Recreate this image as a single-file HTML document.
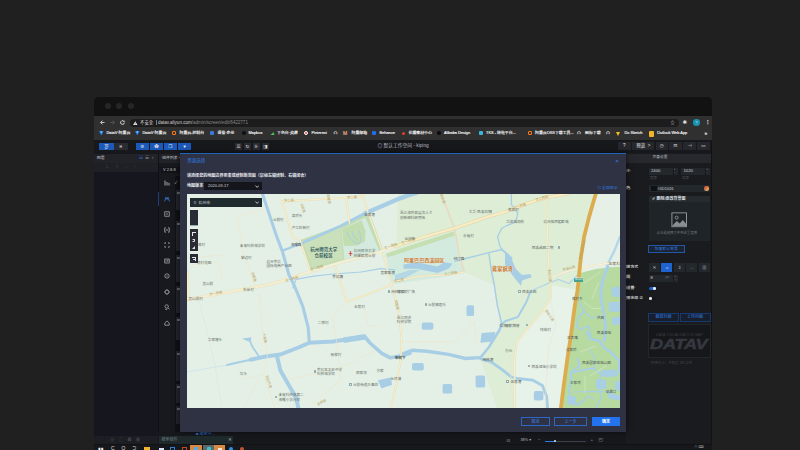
<!DOCTYPE html>
<html lang="zh">
<head>
<meta charset="utf-8">
<title>DataV</title>
<style>
html,body{margin:0;padding:0;}
body{width:800px;height:450px;overflow:hidden;background:#202020;position:relative;font-family:"Liberation Sans","Noto Sans CJK SC","DejaVu Sans",sans-serif;color:#ccc;}
.a{position:absolute;}
.t{position:absolute;white-space:nowrap;line-height:1;font-size:4.2px;color:#cfcfcf;}
/* window */
#win{left:94px;top:97px;width:618px;height:353px;background:#121212;border-radius:4.5px 4.5px 0 0;overflow:hidden;}
#stage{left:-94px;top:-97px;width:800px;height:450px;}
.dot{width:6px;height:6px;border-radius:50%;background:#262626;top:103px;}
#tb{left:94px;top:116px;width:618px;height:24px;background:#303031;}
#pill{left:130px;top:118.5px;width:549px;height:8px;border-radius:4px;background:#1c1c1d;}
.bm{top:131.4px;font-size:3.9px;color:#f4f4f4;-webkit-text-stroke:.14px #f4f4f4;}
.bi{top:131.3px;width:4.2px;height:4.2px;border-radius:1px;}
#app{left:94px;top:140px;width:617px;height:304px;background:#17181c;}
.btn{top:143px;height:7px;background:#1b59bb;}
.gb{top:143px;height:7px;background:#2a2b31;}
.rb{top:142.3px;height:7.6px;background:#26272d;}
.ic{font-size:4.5px;color:#e8e8e8;text-align:center;line-height:7px;}
/* panels */
#lay{left:94px;top:153px;width:64px;height:291px;background:#16171e;}
#layh{left:94px;top:153.5px;width:64px;height:9px;background:#212329;}
#layt{left:94px;top:162.5px;width:64px;height:9.5px;background:#1e2026;}
#comp{left:158px;top:153px;width:22px;height:291px;background:#18191e;}
#comph{left:159px;top:153.5px;width:21px;height:9px;background:#212329;}
.ci{left:163.5px;width:6px;height:6px;font-size:6px;color:#b8bcc4;line-height:6px;text-align:center;}
#rp{left:626px;top:153px;width:85px;height:291px;background:#191b1e;background-image:radial-gradient(#22262a 0.4px,transparent 0.5px);background-size:2px 2px;}
#rph{left:626px;top:153.5px;width:85px;height:9px;background:#26282e;}
.inp{background:#23282d;height:6.6px;}
.lab{font-size:3.86px;color:#d0d2d6;font-weight:bold;}
/* dialog */
#dlg{left:180px;top:153px;width:446px;height:279px;background:#2f3243;border-top:1.3px solid #1f64b4;box-sizing:border-box;box-shadow:0 0 6px rgba(0,0,0,.6);}
#map{left:187px;top:194px;width:433px;height:214px;background:#e4f0e6;overflow:hidden;}
.ml{position:absolute;white-space:nowrap;line-height:1;font-size:3.6px;color:#6b6f6b;}
</style>
</head>
<body>
<div id="win" class="a"><div id="stage" class="a">
  <!-- title bar -->
  <div class="a dot" style="left:105px"></div>
  <div class="a dot" style="left:116.4px"></div>
  <div class="a dot" style="left:127.6px"></div>
  <!-- chrome toolbar -->
  <div id="tb" class="a"></div>
  <div id="pill" class="a"></div>
  <svg class="a" style="left:99.6px;top:120.2px" width="5" height="5" viewBox="0 0 5 5" fill="none" stroke="#e8e8e8" stroke-width=".8"><path d="M4.6 2.5H.7M2.4 .6L.6 2.5L2.4 4.4"/></svg>
  <svg class="a" style="left:109.6px;top:120.2px" width="5" height="5" viewBox="0 0 5 5" fill="none" stroke="#5e5e5e" stroke-width=".8"><path d="M.4 2.5H4.3M2.6 .6L4.4 2.5L2.6 4.4"/></svg>
  <svg class="a" style="left:120.2px;top:120.2px" width="5" height="5" viewBox="0 0 5 5" fill="none" stroke="#e8e8e8" stroke-width=".85"><path d="M4.3 2.5A1.85 1.85 0 1 1 3.6 1.05"/><path d="M4.5 .3V1.9H2.9Z" fill="#e8e8e8" stroke="none"/></svg>
  <svg class="a" style="left:133px;top:120.6px" width="4.6" height="4.2" viewBox="0 0 4.6 4.2"><path d="M2.3 .2L4.5 4H.1Z" fill="#e8e8e8"/><path d="M2.3 1.6V2.8M2.3 3.2V3.6" stroke="#222" stroke-width=".5"/></svg>
  <div class="t" style="left:140px;top:120.6px;font-size:4.4px;color:#dcdcdc;">不安全</div>
  <div class="a" style="left:155.5px;top:120px;width:.5px;height:5px;background:#777;"></div>
  <div class="t" style="left:158px;top:120.5px;font-size:4.55px;color:#d0d0d0;">datav.aliyun.com<span style="color:#8a8a8a">/admin/screen/edit/6422771</span></div>
  <div class="t" style="left:670.6px;top:120.6px;font-size:4.2px;color:#bdbdbd;">☆</div>
  <div class="t" style="left:682.5px;top:119.8px;font-size:5.5px;color:#e0e0e0;">✱</div>
  <div class="a" style="left:693px;top:119.3px;width:6.6px;height:6.6px;border-radius:50%;background:#1a93b0;"></div>
  <div class="t" style="left:695.2px;top:120.5px;font-size:4px;color:#cfeaf2;">?</div>
  <div class="t" style="left:705px;top:119.6px;font-size:5.5px;color:#e0e0e0;font-weight:bold;">⋮</div>

  <!-- bookmarks -->
  <svg class="a" style="left:99.3px;top:131.2px" width="4.6" height="4.4" viewBox="0 0 4.6 4.4"><path d="M0 .2H4.6L2.3 4.3Z" fill="#1f8bff"/><path d="M1.2 .2H3.4L2.3 2.2Z" fill="#8cc8ff"/></svg><div class="t bm" style="left:106.5px">DataV·阿里云</div>
  <svg class="a" style="left:135.3px;top:131.2px" width="4.6" height="4.4" viewBox="0 0 4.6 4.4"><path d="M0 .2H4.6L2.3 4.3Z" fill="#1f8bff"/><path d="M1.2 .2H3.4L2.3 2.2Z" fill="#8cc8ff"/></svg><div class="t bm" style="left:142.5px">DataV·阿里云</div>
  <div class="a bi" style="left:172px;background:transparent;border:0.8px solid #ff7a1a;box-sizing:border-box;"></div><div class="t bm" style="left:179.5px">阿里云-控制台</div>
  <div class="a bi" style="left:210px;background:#3e78d6;"></div><div class="t bm" style="left:217.5px">语雀·企业</div>
  <div class="a bi" style="left:241.5px;background:#101010;border-radius:50%;"></div><div class="t bm" style="left:248.5px">Mapbox</div>
  <div class="a" style="left:270.5px;top:131.5px;width:0;height:0;border-left:2px solid transparent;border-right:2px solid transparent;border-bottom:3.8px solid #49c24c;transform:skewX(-18deg);"></div><div class="t bm" style="left:277px">下色台·资源</div>
  <div class="a bi" style="left:304px;background:#e23b2e;border-radius:50%;border:.6px solid #fff;box-sizing:border-box;"></div><div class="t bm" style="left:311.5px">Pinterest</div>
  <div class="t bm" style="left:333.5px;color:#dadada">凸</div>
  <div class="t bm" style="left:343px;color:#ff6a1f;font-size:5px;top:130.8px">M</div><div class="t bm" style="left:351.5px">阿里邮箱</div>
  <div class="a bi" style="left:372px;background:#1f6cf0;"></div><div class="t bm" style="left:379.5px">Behance</div>
  <div class="a bi" style="left:401.5px;top:132px;width:3px;height:3px;background:#e8392c;border-radius:50%;"></div><div class="t bm" style="left:408.5px">花瓣素材中心</div>
  <div class="a bi" style="left:436.5px;background:#0a0a0a;border-radius:50%;"></div><div class="t bm" style="left:444px">Alibaba Design</div>
  <div class="a bi" style="left:478.5px;width:4px;background:#39b6d8;"></div><div class="t bm" style="left:486px">TKS - 特效平台...</div>
  <div class="a bi" style="left:527.5px;background:transparent;border:0.8px solid #ff7a1a;box-sizing:border-box;"></div><div class="t bm" style="left:535px">阿里云OSS下载工具...</div>
  <div class="t bm" style="left:577px;color:#dadada">凸</div><div class="t bm" style="left:585px">图标下载</div>
  <div class="t bm" style="left:606px;color:#dadada">凸</div>
  <div class="a" style="left:615.5px;top:131.5px;width:0;height:0;border-left:2.7px solid transparent;border-right:2.7px solid transparent;border-top:4px solid #fdbd1a;"></div><div class="t bm" style="left:624.5px">Do Sketch</div>
  <div class="a bi" style="left:648.5px;width:5.5px;height:5.5px;background:#f2b52a;"></div><div class="t bm" style="left:657px">Outlook Web App</div>
  <div class="t bm" style="left:704.5px;font-size:5px;top:130.5px">»</div>

  <!-- app -->
  <div id="app" class="a"></div>
  <div class="a btn ic" style="left:99px;width:15px;">罗</div>
  <div class="a gb ic" style="left:114px;width:13.5px;">ʜ</div>
  <div class="a btn ic" style="left:136px;width:12.7px;">⚙</div>
  <div class="a btn ic" style="left:150px;width:13px;">✿</div>
  <div class="a btn ic" style="left:164px;width:12.7px;">❐</div>
  <div class="a btn ic" style="left:178px;width:13px;">♥</div>
  <div class="a gb ic" style="left:235px;width:7px;">☰</div>
  <div class="a gb ic" style="left:244px;width:7px;">↻</div>
  <div class="a gb ic" style="left:253px;width:7px;">⊪</div>
  <div class="a gb ic" style="left:262px;width:7px;">◨</div>
  <div class="t" style="left:377.5px;top:143.9px;font-size:4.75px;color:#b9bcc2;">◎ 默认工作空间 - kiping</div>
  <div class="a rb ic" style="left:618px;width:12.6px;">?</div>
  <div class="a rb ic" style="left:632.4px;width:21.8px;">预览 &nbsp;&gt;</div>
  <div class="a rb ic" style="left:655.5px;width:12.5px;">◷</div>
  <div class="a rb ic" style="left:669px;width:13px;">⊡</div>
  <div class="a rb ic" style="left:683px;width:13.3px;">⊣</div>
  <div class="a rb ic" style="left:697.2px;width:12.6px;">▭</div>

  <!-- layer panel -->
  <div id="lay" class="a"></div>
  <div id="layh" class="a"></div>
  <div id="layt" class="a"></div>
  <div class="t" style="left:96.8px;top:156.2px;font-size:3.9px;color:#c9ccd2;">图层</div>
  <div class="t" style="left:139px;top:155.8px;font-size:4.6px;color:#3a7be0;">☷</div>
  <div class="t" style="left:145px;top:155.8px;font-size:4.6px;color:#8f939b;">☰</div>
  <div class="t" style="left:152px;top:155.8px;font-size:4.6px;color:#8f939b;">‹</div>
  <div class="t" style="left:105px;top:165px;font-size:4.6px;color:#3d4048;letter-spacing:6.3px;">↧↥↓↑</div>
  <div class="a" style="left:94px;top:436px;width:64px;height:8px;background:#1c1e23;"></div>
  <div class="t" style="left:110px;top:438px;font-size:4.4px;color:#3d4048;letter-spacing:4.2px;">▣☖☗◉</div>
  <!-- component column -->
  <div id="comp" class="a"></div>
  <div id="comph" class="a"></div>
  <div class="a" style="left:157.5px;top:153px;width:.7px;height:291px;background:#0f1013;"></div>
  <div class="t" style="left:162px;top:156.2px;font-size:3.9px;color:#c9ccd2;">组件列表 ‹</div>
  <div class="a" style="left:161px;top:166.5px;width:19px;height:6px;background:#121317;"></div>
  <div class="t" style="left:163px;top:167.6px;font-size:4px;color:#c9ccd2;">V 2.8.8</div>
  <div class="a" style="left:175.3px;top:176px;width:4.7px;height:256px;background:#101115;"></div>
  <div class="t" style="left:174.5px;top:180.5px;font-size:4.4px;color:#c9ccd2;">✓</div>
  <div class="a" style="left:175.6px;top:190px;width:4.4px;height:20.0px;background:#22242a;"></div>
  <div class="a" style="left:176.8px;top:192px;width:3.2px;height:2.4px;background:#7d8088;opacity:.7;"></div>
  <div class="a" style="left:175.6px;top:221px;width:4.4px;height:30.0px;background:#22242a;"></div>
  <div class="a" style="left:176.8px;top:223px;width:3.2px;height:2.4px;background:#7d8088;opacity:.7;"></div>
  <div class="a" style="left:175.6px;top:255px;width:4.4px;height:27.0px;background:#22242a;"></div>
  <div class="a" style="left:176.8px;top:257px;width:3.2px;height:2.4px;background:#7d8088;opacity:.7;"></div>
  <div class="a" style="left:175.6px;top:286px;width:4.4px;height:27.0px;background:#22242a;"></div>
  <div class="a" style="left:176.8px;top:288px;width:3.2px;height:2.4px;background:#7d8088;opacity:.7;"></div>
  <div class="a" style="left:175.6px;top:317px;width:4.4px;height:23.0px;background:#22242a;"></div>
  <div class="a" style="left:176.8px;top:319px;width:3.2px;height:2.4px;background:#7d8088;opacity:.7;"></div>
  <div class="a" style="left:175.6px;top:351px;width:4.4px;height:30.0px;background:#22242a;"></div>
  <div class="a" style="left:176.8px;top:353px;width:3.2px;height:2.4px;background:#7d8088;opacity:.7;"></div>
  <div class="a" style="left:175.6px;top:384px;width:4.4px;height:18.5px;background:#22242a;"></div>
  <div class="a" style="left:176.8px;top:386px;width:3.2px;height:2.4px;background:#7d8088;opacity:.7;"></div>
  <div class="a" style="left:175.6px;top:405.6px;width:4.4px;height:18.4px;background:#22242a;"></div>
  <div class="a" style="left:176.8px;top:407.6px;width:3.2px;height:2.4px;background:#7d8088;opacity:.7;"></div>

  <svg class="a" style="left:163.7px;top:180.3px;color:#b4b8c0" width="6" height="6" viewBox="0 0 6 6" fill="none" stroke="currentColor" stroke-width=".7"><path d="M1 .5V5.5M3 2V5.5M5 2.8V5.5" stroke-width=".9"/></svg>
  <svg class="a" style="left:163.7px;top:195.8px;color:#3a7be0" width="6" height="6" viewBox="0 0 6 6" fill="none" stroke="currentColor" stroke-width=".7"><path d="M.6 5.4L2 1.2L3 3.6L4 1.2L5.4 5.4" stroke-width=".8"/></svg>
  <svg class="a" style="left:163.7px;top:211.3px;color:#b4b8c0" width="6" height="6" viewBox="0 0 6 6" fill="none" stroke="currentColor" stroke-width=".7"><rect x=".8" y=".8" width="4.4" height="4.4"/><rect x="2.4" y="2.4" width="1.2" height="1.2" fill="currentColor" stroke="none"/></svg>
  <svg class="a" style="left:163.7px;top:226.8px;color:#b4b8c0" width="6" height="6" viewBox="0 0 6 6" fill="none" stroke="currentColor" stroke-width=".7"><path d="M1.8 .8H.8V5.2H1.8M4.2 .8H5.2V5.2H4.2M3 2V4" stroke-width=".8"/></svg>
  <svg class="a" style="left:163.7px;top:242.3px;color:#b4b8c0" width="6" height="6" viewBox="0 0 6 6" fill="none" stroke="currentColor" stroke-width=".7"><path d="M.8 2V.8H2M4 .8H5.2V2M5.2 4V5.2H4M2 5.2H.8V4"/></svg>
  <svg class="a" style="left:163.7px;top:257.8px;color:#b4b8c0" width="6" height="6" viewBox="0 0 6 6" fill="none" stroke="currentColor" stroke-width=".7"><rect x=".8" y="1" width="4.4" height="4"/><path d="M2 2.2V3.8M3.2 3.8V2.2H4.2V3H3.2" stroke-width=".5"/></svg>
  <svg class="a" style="left:163.7px;top:273.3px;color:#b4b8c0" width="6" height="6" viewBox="0 0 6 6" fill="none" stroke="currentColor" stroke-width=".7"><circle cx="3" cy="3" r="2.2"/><circle cx="3" cy="3" r=".6" fill="currentColor" stroke="none"/></svg>
  <svg class="a" style="left:163.7px;top:288.8px;color:#b4b8c0" width="6" height="6" viewBox="0 0 6 6" fill="none" stroke="currentColor" stroke-width=".7"><circle cx="3" cy="3" r="2"/><path d="M3 .2V1.6M3 4.4V5.8M.2 3H1.6M4.4 3H5.8" stroke-width=".6"/></svg>
  <svg class="a" style="left:163.7px;top:304.3px;color:#b4b8c0" width="6" height="6" viewBox="0 0 6 6" fill="none" stroke="currentColor" stroke-width=".7"><circle cx="2.7" cy="2.5" r="1.7"/><path d="M3.9 3.8L5.4 5.4M1.2 5.4H3.2"/></svg>
  <svg class="a" style="left:163.7px;top:319.8px;color:#b4b8c0" width="6" height="6" viewBox="0 0 6 6" fill="none" stroke="currentColor" stroke-width=".7"><path d="M.8 3L3 .9L5.2 3V5.2H.8Z"/></svg>
  <div class="a" style="left:158.2px;top:192px;width:.6px;height:13.5px;background:#1d3f7a;"></div>
  <!-- bottom bars -->
  <div class="a" style="left:158px;top:432px;width:468px;height:12px;background:#17181c;"></div>
  <div class="a" style="left:159px;top:436px;width:74px;height:8px;background:#1f2a2c;"></div>
  <div class="t" style="left:161.5px;top:438px;font-size:4px;color:#6f7c80;">搜索组件</div>
  <div class="t" style="left:228px;top:437.5px;font-size:4.6px;color:#9aa;">✕</div>
  <div class="t" style="left:196px;top:432.2px;font-size:4px;color:#2f7de0;">■ 搜索中...</div>
  <div class="t" style="left:506.5px;top:438.6px;font-size:4.4px;color:#9da1a8;">⊡</div>
  <div class="t" style="left:520.5px;top:439.2px;font-size:3.8px;color:#b5b8be;">38% ▾</div>
  <div class="t" style="left:538px;top:438.4px;font-size:4.4px;color:#9da1a8;">−</div>
  <div class="a" style="left:545px;top:440.8px;width:41px;height:.7px;background:#3c4048;"></div>
  <div class="a" style="left:545px;top:440.8px;width:10px;height:.7px;background:#2f7de0;"></div>
  <div class="a" style="left:554px;top:440px;width:2.2px;height:2.2px;border-radius:50%;background:#dfe6f0;"></div>
  <div class="t" style="left:590.5px;top:438.4px;font-size:4.4px;color:#9da1a8;">+</div>
  <div class="t" style="left:598.5px;top:438.4px;font-size:4.6px;color:#9da1a8;">◰</div>
  <!-- taskbar -->
  <div class="a" style="left:94px;top:444.5px;width:618px;height:6px;background:#17181b;"></div>
  <div class="t" style="left:98px;top:446.5px;font-size:5px;color:#f0f0f0;">▮▮</div>
  <div class="t" style="left:111px;top:446.3px;font-size:5px;color:#ddd;letter-spacing:7px;">ϹΟϽ</div>
  <div class="a" style="left:144px;top:447px;width:6px;height:3px;background:#f2b632;"></div>
  <div class="a" style="left:159px;top:447.5px;width:5px;height:3px;background:#d7e6f4;"></div>
  <div class="a" style="left:170px;top:446.5px;width:5px;height:4px;border:.7px solid #2a7fd6;box-sizing:border-box;"></div>
  <div class="a" style="left:182px;top:446.5px;width:5px;height:4px;border:.7px solid #c04a23;box-sizing:border-box;"></div>
  <div class="a" style="left:189.5px;top:444.6px;width:12px;height:6px;background:#d58a45;"></div>
  <div class="a" style="left:203px;top:444.6px;width:11px;height:6px;background:#5d6a6c;"></div>
  <div class="a" style="left:214px;top:444.6px;width:11px;height:6px;background:#d58a45;"></div>
  <div class="a" style="left:193.5px;top:447px;width:4px;height:3px;background:#5aa9e6;border-radius:1px 1px 0 0;"></div>
  <div class="a" style="left:206.5px;top:447px;width:4px;height:3px;background:#3cc3c6;border-radius:1px 1px 0 0;"></div>
  <div class="a" style="left:217.5px;top:447.5px;width:4px;height:3px;background:#f4e7cf;"></div>
  <div class="a" style="left:229px;top:447px;width:4px;height:4px;border-radius:50%;background:#2a8fe8;"></div>
  <div class="a" style="left:240px;top:447px;width:4px;height:4px;border-radius:50%;background:#c0552f;"></div>
  <div class="t" style="left:694px;top:445.5px;font-size:3.6px;color:#aaa;">∧ ⌨</div>

  <!-- right panel -->
  <div id="rp" class="a"></div>
  <div id="rph" class="a"></div>
  <div class="t" style="left:652.6px;top:156.2px;font-size:3.7px;color:#b9bcc2;">页面设置</div>
  <div class="t lab" style="left:615px;top:170.2px;">屏幕大小</div>
  <div class="a inp" style="left:649px;top:168px;width:28.5px;"></div>
  <div class="a inp" style="left:681px;top:168px;width:28.8px;"></div>
  <div class="t" style="left:651px;top:169.3px;font-size:4.2px;color:#d4d7db;">2400</div>
  <div class="t" style="left:683.5px;top:169.3px;font-size:4.2px;color:#d4d7db;">1020</div>
  <div class="a" style="left:672.5px;top:168px;width:.5px;height:6.6px;background:#15171a;"></div>
  <div class="a" style="left:704.8px;top:168px;width:.5px;height:6.6px;background:#15171a;"></div>
  <div class="t" style="left:673.6px;top:168.4px;font-size:3px;color:#8d9096;">+</div>
  <div class="t" style="left:673.8px;top:171.2px;font-size:3px;color:#8d9096;">-</div>
  <div class="t" style="left:705.9px;top:168.4px;font-size:3px;color:#8d9096;">+</div>
  <div class="t" style="left:706.1px;top:171.2px;font-size:3px;color:#8d9096;">-</div>
  <div class="t" style="left:650px;top:176.8px;font-size:3.5px;color:#4c5057;">宽度</div>
  <div class="t" style="left:682px;top:176.8px;font-size:3.5px;color:#4c5057;">高度</div>
  <div class="t lab" style="left:615px;top:186.9px;">背景颜色</div>
  <div class="a inp" style="left:649px;top:185.2px;width:60.8px;height:6.4px;"></div>
  <div class="a" style="left:650.5px;top:186px;width:6px;height:4.8px;background:#0d1016;"></div>
  <div class="t" style="left:657.6px;top:186.6px;font-size:3.9px;color:#d4d7db;">#0D1016</div>
  <div class="a" style="left:704.3px;top:186.2px;width:4.4px;height:4.4px;border-radius:50%;background:conic-gradient(#e8623a,#f2a33a,#d8a070,#c06a4a,#e8623a);"></div>
  <div class="a inp" style="left:649px;top:196px;width:60.8px;height:6px;background:#262b30;"></div>
  <div class="t" style="left:652px;top:197px;font-size:4px;color:#dfe1e5;font-weight:bold;">✐ 删除/更改背景图</div>
  <div class="a" style="left:649px;top:202.4px;width:60.8px;height:39px;background:#1e2428;"></div>
  <svg class="a" style="left:671px;top:212.2px;" width="16.4" height="15.6" viewBox="0 0 18 18" preserveAspectRatio="none"><rect x="1" y="1" width="16" height="16" fill="none" stroke="#9a9ea4" stroke-width="1"/><circle cx="6.2" cy="6.5" r="1.7" fill="none" stroke="#9a9ea4" stroke-width=".9"/><path d="M1.5 15.5 L6.5 10.5 L9.5 13.2 L13 9.2 L16.5 13.5 L16.5 16.5 L1.5 16.5Z" fill="#8a8e94"/></svg>
  <div class="t" style="left:656.5px;top:231.8px;font-size:3.4px;color:#6f747b;">点击或拖拽文件到这里更换</div>
  <div class="a" style="left:648.3px;top:244.8px;width:37.2px;height:8.7px;border:.6px solid #2456a6;box-sizing:border-box;background:#1b2230;"></div>
  <div class="t" style="left:654.5px;top:247.2px;font-size:3.9px;color:#2f7de0;">恢复默认背景</div>
  <div class="t lab" style="left:615px;top:266.2px;">页面缩放方式</div>
  <div class="a inp" style="left:648.8px;top:263.3px;width:10.9px;height:9.2px;"></div>
  <div class="a inp" style="left:661.3px;top:263.3px;width:10.9px;height:9.2px;background:#1f63cf;"></div>
  <div class="a inp" style="left:673.8px;top:263.3px;width:10.9px;height:9.2px;"></div>
  <div class="a inp" style="left:686.2px;top:263.3px;width:10.9px;height:9.2px;"></div>
  <div class="a inp" style="left:698.7px;top:263.3px;width:10.9px;height:9.2px;"></div>
  <div class="t" style="left:652.5px;top:265.5px;font-size:4.6px;color:#a9adb3;">✕</div>
  <div class="t" style="left:664.8px;top:265.5px;font-size:4.6px;color:#e8eefc;">⇔</div>
  <div class="t" style="left:677.8px;top:265.5px;font-size:4.6px;color:#a9adb3;">⇕</div>
  <div class="t" style="left:689.6px;top:265.5px;font-size:4.6px;color:#a9adb3;">↔</div>
  <div class="t" style="left:702px;top:265.5px;font-size:4.6px;color:#a9adb3;">⊕</div>
  <div class="t lab" style="left:615px;top:276.2px;">栅格间距</div>
  <div class="a inp" style="left:648.8px;top:274.5px;width:29px;height:7px;"></div>
  <div class="t" style="left:650.5px;top:276px;font-size:4px;color:#d4d7db;">8</div>
  <div class="t" style="left:665.5px;top:276.2px;font-size:3.6px;color:#6b7077;">px</div>
  <div class="a" style="left:672.6px;top:274.5px;width:.5px;height:7px;background:#15171a;"></div>
  <div class="t" style="left:674.2px;top:275px;font-size:3px;color:#8d9096;">+</div>
  <div class="t" style="left:674.4px;top:278px;font-size:3px;color:#8d9096;">-</div>
  <div class="t lab" style="left:615px;top:286.8px;">缩略图设置·</div>
  <div class="a" style="left:648.8px;top:287px;width:7.2px;height:3.4px;border-radius:1.7px;background:#1f63cf;"></div>
  <div class="a" style="left:653px;top:287.4px;width:2.6px;height:2.6px;border-radius:50%;background:#e9eefb;"></div>
  <div class="t lab" style="left:615px;top:296.7px;">页面使用水印 ⊙</div>
  <div class="a" style="left:648.8px;top:297px;width:7.2px;height:3.4px;border-radius:1.7px;background:#15171b;"></div>
  <div class="a" style="left:649.2px;top:297.4px;width:2.6px;height:2.6px;border-radius:50%;background:#e3e5e9;"></div>
  <div class="a" style="left:648.3px;top:312.6px;width:30.5px;height:9px;border:.6px solid #17396f;box-sizing:border-box;background:#181f2c;"></div>
  <div class="a" style="left:680px;top:312.6px;width:30.6px;height:9px;border:.6px solid #17396f;box-sizing:border-box;background:#181f2c;"></div>
  <div class="t" style="left:655.5px;top:315.2px;font-size:4px;color:#2f7de0;">截取封面</div>
  <div class="t" style="left:687px;top:315.2px;font-size:4px;color:#2f7de0;">上传封面</div>
  <div class="a" style="left:648.3px;top:324px;width:62.4px;height:34px;background:#15171a;border:.5px solid #22252a;box-sizing:border-box;"></div>
  <div class="t" style="left:656px;top:333.8px;font-size:3.55px;color:#3a3e46;letter-spacing:.1px;">DATA VISUALIZATION MAP</div>
  <div class="t" style="left:650px;top:336.6px;font-size:14px;font-weight:bold;font-style:italic;color:#35383f;-webkit-text-stroke:.5px #35383f;letter-spacing:-.1px;transform:scaleX(1.29);transform-origin:left top;">DATAV</div>
  <div class="t" style="left:650px;top:361.6px;font-size:3.4px;color:#41454c;">*封面大小：不超过 1M 以内</div>

  <!-- dialog -->
  <div id="dlg" class="a"></div>
  <div class="t" style="left:187.2px;top:159.2px;font-size:4.5px;color:#2f7de0;">资源选择</div>
  <div class="t" style="left:615.2px;top:157.6px;font-size:6px;color:#2f7de0;">×</div>
  <div class="t" style="left:187px;top:174.2px;font-size:4.05px;color:#e8e9ee;font-weight:bold;">请选择您的地图边界要素或绘制新范围（鼠标左键绘制、右键闭合）</div>
  <div class="t" style="left:187px;top:184.1px;font-size:4.05px;color:#e8e9ee;font-weight:bold;">地图版本</div>
  <div class="a" style="left:204px;top:182.3px;width:58px;height:7.8px;background:#15161c;"></div>
  <div class="t" style="left:208px;top:184.2px;font-size:4px;color:#d8dade;">2020-09-17</div>
  <svg class="a" style="left:254.6px;top:184.8px" width="4.4" height="3" viewBox="0 0 4.4 3" fill="none" stroke="#e4e6ea" stroke-width=".8"><path d="M.4 .5L2.2 2.4L4 .5"/></svg>
  <div class="t" style="left:597.5px;top:185.8px;font-size:3.9px;color:#2f7de0;">☐ 全部显示</div>
  <div id="map" class="a">
  <svg class="a" style="left:0;top:0" width="433" height="214" viewBox="187 194 433 214">
  <!--MAPSVG-->  <rect x="187" y="194" width="433" height="214" fill="#e4f0e6"/>
  <!-- greener regions -->
  <path d="M398 194 L596 194 L584 237 L578 280 L571 338 L561 408 L497 408 L480 358 L490 347 L500 330 L498 306 L494 285 L464 272 L395 284 L396 250 Z" fill="#ddedd6"/>
  <path d="M551 285 L551 298 L543.4 310.6 L526.4 329.8 L516.7 342.7 L514.6 360 L514.6 408 L561 408 L571 338 L577 290 Z" fill="#e7f2e8"/>
  <path d="M596 194 L620 194 L620 267 L608 267.5 L596 269 L586 271.5 L579 273.5 L584 237Z" fill="#e7f0e6"/>
  <!-- wetland -->
  <path d="M579 273.5 L586 271.5 L596 269 L608 267.5 L620 266.8 L620 408 L560.5 408 L567 357.8 L574.4 306.4Z" fill="#b7daa1"/>
  <!-- park -->
  <path d="M299 240.5 L340 225.5 L366.5 213.5 L371 217 L383.5 250.6 L344 261 L310.5 270.5Z" fill="#c3ddb4"/>
  <path d="M341.5 229 L365.5 217.5 L379 250.5 L344.5 259.5 Z" fill="#d4eadf"/>
  <path d="M303 241.5 L340 227 L343 258.5 L312 267Z" fill="#c9e0bb"/>
  <path d="M342 229 L361.5 220.5 L365.5 231 L365 241 L358 245.6 L344 246Z" fill="#c2ddb0"/>
  <path d="M347 232 C349 238 353 243 358 243.5 C362 243 361 236 358.5 229.5 M352 231 C353 236 355.5 239.5 358 240" fill="none" stroke="#a9cfe6" stroke-width="1"/>
  <!-- alibaba campus -->
  <path d="M385.7 254 L395 250.6 L453.7 231.4 L454.8 235.6 L463.3 272 L448.4 276.2 L395 283.7 L391.5 282Z" fill="#d3ebdf"/>
  <path d="M386 253.5 L395 250.6 L453.7 231.4 L454.8 235.6 L395 254.9 L387 257.5Z" fill="#c5deb2"/>
  <!-- west main road (under water) -->
  <g fill="none" stroke-linecap="round" stroke-linejoin="round">
    <path d="M186 299.9 L210 295.5 L244 289.2 L265 285.4 L280 281.6 L300 275 L304 273.6" stroke="#e8dfba" stroke-width="3.1"/>
    <path d="M186 299.9 L210 295.5 L244 289.2 L265 285.4 L280 281.6 L300 275 L304 273.6" stroke="#f3eed2" stroke-width="2.3"/>
  </g>
  <!-- water -->
  <g fill="none" stroke="#a8cee6" stroke-linecap="round" stroke-linejoin="round">
    <path d="M262.2 193 L267.5 209 L276 234.6 L282.5 251.7 L289 275 L294.5 286 L302.8 306.4 L308.2 327.7 L309.2 341" stroke-width="3.1"/>
    <path d="M282.5 250.6 L300 244" stroke-width="2.4"/>
    <path d="M300 244 L340.6 226 L365.4 213.2 L400 198.3 L408 195.5 L416.4 193" stroke-width="3"/>
    <path d="M365.4 213.2 L400 198.3 L408 195.5 L416.4 193" stroke-width="4.4"/>
    <path d="M292.8 288 L296 279.4 L314 276.2 L333.4 274 L361 272 L380.4 268.7 L395 269.8" stroke-width="1.2"/>
    <!-- lower-left river -->
    <path d="M250.5 359.7 L265.4 356.5 L280.4 354.5 L298.5 347.5 L309.2 342.7 L332.7 341.6 L360.5 337.3" stroke-width="4"/>
    <path d="M227 365 L235.5 363 L250.5 359.7" stroke-width="2.2"/>
    <path d="M360.5 337.8 L365.5 337.5 L370 343 L381.8 353.3 L390.4 357.8 L400 356 L410 353.3" stroke-width="3.6"/>
    <path d="M345 340 L364 337" stroke-width="5.4"/>
    <path d="M277.2 357 L280.4 370.6 L289 385.5 L296.4 398.3 L298.5 409" stroke-width="4"/>
    <path d="M250 341 L252 346 L259 356.5" stroke-width="1.8"/>
    <path d="M187 372 L227 365" stroke-width=".7" stroke="#c5e0ee"/>
    <!-- east streams -->
    <path d="M511.4 193 L511.4 204.7 L517.8 213.2 L515.7 221.8 L505 226.5 L501.8 228.2 L497.5 236.7 L499.6 245.2 L501.8 249.5" stroke-width="1.3"/>
    <path d="M501.8 249.5 L489 252.7 L467.6 258 L454.8 261.3" stroke-width="1.3"/>
    <path d="M501.8 249.5 L507 254 L511.4 258" stroke-width="2"/>
    <path d="M489 253.8 L491 268.7 L494.3 285 L497.5 306.4 L501.4 322" stroke-width="1.5"/>
    <path d="M532.8 290 L547.7 283.7 L558.4 279.4 L569 283.7 L577.6 275" stroke-width="1.3" stroke="#b4d6ea"/>
    <path d="M530.6 291.4 L526.4 302 L517.8 317 L505 321.3 L501.8 324.5" stroke-width="2"/>
    <path d="M620 236.7 L614 251.6 L607.5 264.5 L603.2 279.4 L601 290" stroke-width="2.4" stroke="#b3d6ea"/>
    <!-- lower right river -->
    <path d="M401.4 354.4 L412 350.3 L427 351.2 L448.4 354.4 L465.5 358.5 L480.4 357.6" stroke-width="3.4"/>
    <path d="M480.4 357.6 L489 347 L499.6 329.8 L501.8 323.4" stroke-width="2.6"/>
    <path d="M480.4 358.7 L491 361.9 L501.8 369.3 L511.4 377 L517.8 378.5 L532.8 380.2 L542.4 385.5 L546.6 396.2 L547.7 409" stroke-width="2.8"/>
  </g>
  <g fill="#a8cee6">
    <path d="M242 338.6 L251.5 337.2 L250.6 342 L246 340.6Z"/>
    <path d="M403.5 264.5 L416.4 262.3 L437.7 266.6 L444 262.3 L452.7 263.4 L448.4 268.7 L437.7 273 L416.4 268.7 L403.5 268.7Z"/>
    <path d="M395 275 L410 270 L420 270 L405 278 L395 281Z" opacity=".7"/>
    <path d="M505 252.7 L511.4 258 L515.7 268.7 L522 275 L530.6 274 L531.7 277.3 L522 280.5 L521 285.8 L515.7 279.4 L509.3 270.9 L505 264.5Z"/>
    <rect x="466.5" y="305.3" width="7.5" height="10.7" rx="1.5"/>
    <rect x="421.7" y="322.4" width="11.7" height="7.4" rx="2"/>
    <path d="M481.5 333 L495.4 332 L493.2 341.6 L480.4 342.7Z"/>
    <rect x="412" y="363" width="11.8" height="7.4" rx="2"/>
    <rect x="475.6" y="375.6" width="9.5" height="12" rx="1.5"/>
    <rect x="442.6" y="384" width="9.5" height="9.5" rx="1.5"/>
    <rect x="533.8" y="390.9" width="9.6" height="9.6" rx="2"/>
    <path d="M378.6 380.8 L390.4 378 L391.4 384.5 L381.8 387.7Z" stroke="#a8cee6" stroke-width="1.2" stroke-linejoin="round"/>
  </g>
  <!-- wetland channels -->
  <g fill="none" stroke="#a8cfe5" stroke-linecap="round" stroke-linejoin="round">
    <path d="M608 266.8 L603.2 278 L600.8 290.8 L601.6 302 L604 314.8 L605.6 326 L604.8 334 L604.4 340.7" stroke-width="3"/>
    <path d="M579.2 302 L584 311.6 L579.2 316.4 L576 326 L580.8 329.2 L588.8 326 L590.4 334 L590.2 338.9" stroke-width="1.6"/>
    <path d="M586.7 331.8 L590.2 338.9 L599 340.7 L604.4 347.8 L611.6 353 L618.7 360.2 L619.6 372.7" stroke-width="2.5"/>
    <path d="M577.8 358.4 L579.6 365.6 L570.7 372.7 L571.6 381.6 L568.9 388.7 L570.7 401 L577.8 404.7 L583 401" stroke-width="2"/>
    <path d="M570.7 372.7 L583 370 L593.8 368.2 L600.9 374.4" stroke-width="1.8"/>
    <path d="M574 392 L595.6 391.3 L613 392" stroke-width="1.2"/>
    <path d="M584 311.6 L592 318 L600 316" stroke-width="1.2"/>
    <path d="M593.8 368.2 L595 358 L590 350" stroke-width="1.2"/>
    <path d="M600.9 374.4 L599 384 L601 398 L596 408" stroke-width="1.5"/>
    <path d="M583 401 L588 396 L594 399" stroke-width="1.3"/>
  </g>
  <g fill="#a8cfe5" stroke="#a8cfe5" stroke-width="1" stroke-linejoin="round">
    <path d="M611.5 288 L619 287 L619.5 296.5 L612.5 296 Z"/>
    <path d="M608.5 303 L619 302 L619.5 311 L610 311.5 Z"/>
    <path d="M601.5 370.5 L616.5 370 L617 376 L603 376.5 Z"/>
    <path d="M596 380.2 L605.5 380 L606 388.4 L597 388.6 Z"/>
    <path d="M615.3 382 L619.6 381.6 L619.6 390.4 L615.6 390 Z"/>
    <path d="M567.5 396 L575.5 397 L575 404.5 L568.5 404 Z"/>
    <path d="M608.5 393.3 L619.6 395.8 L619.6 400 L609 398 Z"/>
    <path d="M612 318 L619.5 317 L619.5 324 L613 324.5 Z"/>
  </g>
  <g fill="none" stroke="#d6ebcc" stroke-width=".6" stroke-linecap="round">
    <path d="M584 282.8 L596.8 274.8 L600 271.6"/>
    <path d="M592 298.8 L598.4 282.8"/>
    <path d="M584 302 L592 308.4 L600.8 308.4"/>
    <path d="M580 352 L596 346 M585 376 L585 392 M590 376 L606 366"/>
  </g>
  <!-- minor roads -->
  <g fill="none" stroke="#efe6cc" stroke-width=".8" stroke-linecap="round" stroke-linejoin="round" opacity=".9">
    <path d="M237.7 215.4 L242 247.4 L252.6 279.4 L254.7 288"/>
    <path d="M237.7 215.4 L263.3 210"/>
    <path d="M187.5 258 L222.7 254.9"/>
    <path d="M193 264.5 L218.4 262.3 L222.7 279.4"/>
    <path d="M259 293.5 L262.2 327.7 L267.5 355.5 L263.3 374.8 L275 408"/>
    <path d="M237.7 380.2 L261 374.8 L244 408" stroke-width=".6"/>
    <path d="M346.6 302 L332.7 317 L336 338.4 L341 380 L311 404"/>
    <path d="M290 379 L341 368 L375 351"/>
    <path d="M364.7 306.4 L368 325.6 L379.7 325.6"/>
    <path d="M401.4 341.6 L454.8 341.6 L474 322.4 L477.2 344.8"/>
    <path d="M199.2 302 L207.8 334 L215.2 366 L222 408" stroke="#d6e2e2" stroke-width=".6"/>
    <path d="M551 302 L556 325 L548 350 L545 408" stroke-width=".6"/>
    <path d="M510 350 L512 408" stroke-width=".6"/>
  </g>
  <!-- secondary roads -->
  <g fill="none" stroke-linecap="round" stroke-linejoin="round">
    <g stroke="#e6dab0" stroke-width="1.8">
      <path d="M282 201.5 L346 197.6 L364.3 196"/>
      <path d="M282 201.5 L292.8 236.7 L300 240 L310 270"/>
      <path d="M346 197.6 L349.4 222.8"/>
      <path d="M362 194 L367.5 211 L382.5 251.6 L389 275 L393 290 L399.3 312.8 L401.4 338.4 L401 357.8 L396.8 383.4 L390.4 408"/>
      <path d="M334.5 264.5 L341.2 285 L346.6 302 L366.9 294.6 L390.4 285"/>
      <path d="M441 193 L454.8 229.2 L459 253.8 L464.4 272" stroke="#ead9c0" stroke-width="1.6"/>
      <path d="M395 281.5 L420.6 276.2 L448.4 274.7 L464.4 272" stroke-width="1.8"/>
      <path d="M546.6 193 L547.7 236.7 L548.8 268.7 L551 285 L551 297.8 L543.4 310.6 L526.4 329.8 L516.7 342.7 L514.6 359.7 L514.6 408"/>
      <path d="M551 278 L563.2 272.6 L576 269 L584 267.6 L592 265.6 L606 263.6 L620 262.4" stroke="#e9e0c0"/>
      <path d="M187.6 272 L188.2 300" stroke-width="2.4"/>
    </g>
    <g stroke="#f7f0d0" stroke-width="1.1">
      <path d="M282 201.5 L346 197.6 L364.3 196"/>
      <path d="M282 201.5 L292.8 236.7 L300 240 L310 270"/>
      <path d="M346 197.6 L349.4 222.8"/>
      <path d="M362 194 L367.5 211 L382.5 251.6 L389 275 L393 290 L399.3 312.8 L401.4 338.4 L401 357.8 L396.8 383.4 L390.4 408"/>
      <path d="M334.5 264.5 L341.2 285 L346.6 302 L366.9 294.6 L390.4 285"/>
      <path d="M395 281.5 L420.6 276.2 L448.4 274.7 L464.4 272" stroke-width="1.1"/>
      <path d="M546.6 193 L547.7 236.7 L548.8 268.7 L551 285 L551 297.8 L543.4 310.6 L526.4 329.8 L516.7 342.7 L514.6 359.7 L514.6 408"/>
      <path d="M551 278 L563.2 272.6 L576 269 L584 267.6 L592 265.6 L606 263.6 L620 262.4" stroke="#f7f2dc"/>
      <path d="M187.6 272 L188.2 300" stroke-width="1.6"/>
    </g>
    <!-- main road 文一西路 -->
    <path d="M300 275 L310 271.7 L344 261.4 L380.4 251.8 L397 245.8" stroke="#e7e2c2" stroke-width="3.1"/>
    <path d="M300 275 L310 271.7 L344 261.4 L380.4 251.8 L397 245.8" stroke="#f2f0d8" stroke-width="2.3"/>
    <path d="M395 246.3 L424.9 236.7 L454.8 228.2 L489 216.4 L505 212 L526.4 203.6 L547.7 197.2 L569 193.6" stroke="#e3d19c" stroke-width="3.3"/>
    <path d="M395 246.3 L424.9 236.7 L454.8 228.2 L489 216.4 L505 212 L526.4 203.6 L547.7 197.2 L569 193.6" stroke="#f6edc8" stroke-width="2.4"/>
    <!-- highway -->
    <path d="M596.3 192 L589.5 215.4 L584.1 236.7 L580.8 258 L578.6 279.4 L577.6 290 L574.7 306.4 L570.5 338.4 L567.5 357.8 L563.2 389.8 L560.8 409" stroke="#dbad4f" stroke-width="3.8"/>
  </g>
<!--/MAPSVG-->
  </svg>
  <!--MAPLABELS-->
  <div class="ml" style="left:11.0px;top:49.7px;color:#6a706b">蒋村</div>
  <div class="ml" style="left:52.8px;top:50.7px;color:#6a706b">未来科技城学校</div>
  <div class="ml" style="left:53.9px;top:62.9px;color:#6a706b">黎边村</div>
  <div class="ml" style="left:10.0px;top:68.3px;color:#6a706b">荷村花园</div>
  <div class="ml" style="left:79.5px;top:66.5px;color:#6a706b">杭州余杭</div>
  <div class="ml" style="left:79.5px;top:71.1px;color:#6a706b">国际电商产业园</div>
  <div class="ml" style="left:85.9px;top:25.1px;color:#6a706b">仓前村</div>
  <div class="ml" style="left:15.4px;top:89.2px;color:#6a706b">吴山前</div>
  <div class="ml" style="left:104.7px;top:20.9px;color:#6a706b">高桥头</div>
  <div class="ml" style="left:104.7px;top:32.5px;color:#6a706b">卢工匠新村</div>
  <div class="ml" style="left:103.7px;top:49.7px;color:#4d5451">海曙路</div>
  <div class="ml" style="left:177.0px;top:20.2px;color:#4d5451">五常港</div>
  <div class="ml" style="left:166.7px;top:56.1px;color:#6a706b">杭州师范大学</div>
  <div class="ml" style="left:166.7px;top:60.5px;color:#6a706b">附属医院仓前</div>
  <div class="ml" style="left:145.3px;top:81.7px;color:#4d5451">余杭塘</div>
  <div class="ml" style="left:193.4px;top:77.5px;color:#4d5451">吴家角港</div>
  <div class="ml" style="left:56.0px;top:95.2px;color:#6a706b">东岸村</div>
  <div class="ml" style="left:1.5px;top:104.4px;color:#6a706b">吴山前村</div>
  <div class="ml" style="left:20.8px;top:145.0px;color:#6a706b">华家塘头</div>
  <div class="ml" style="left:52.8px;top:178.5px;color:#6a706b">坟头</div>
  <div class="ml" style="left:91.5px;top:200.3px;color:#6a706b">未来科技城第二</div>
  <div class="ml" style="left:91.5px;top:204.9px;color:#6a706b">海曙小学分校</div>
  <div class="ml" style="left:167.0px;top:111.9px;color:#6a706b">五常村</div>
  <div class="ml" style="left:130.8px;top:127.9px;color:#6a706b">二联村</div>
  <div class="ml" style="left:143.6px;top:159.9px;color:#6a706b">杨家村</div>
  <div class="ml" style="left:130.0px;top:174.8px;color:#6a706b">余杭区太炎中学</div>
  <div class="ml" style="left:130.0px;top:179.1px;color:#6a706b">科技城学校</div>
  <div class="ml" style="left:169.0px;top:178.0px;color:#6a706b">邵家坝</div>
  <div class="ml" style="left:189.5px;top:175.9px;color:#6a706b">方家</div>
  <div class="ml" style="left:207.6px;top:163.1px;color:#4d5451">中桥下</div>
  <div class="ml" style="left:204.0px;top:96.9px;color:#6a706b">闲林职高</div>
  <div class="ml" style="left:209.8px;top:122.5px;color:#6a706b">浙江同济</div>
  <div class="ml" style="left:209.8px;top:126.8px;color:#6a706b">科技学院</div>
  <div class="ml" style="left:203.5px;top:183.5px;color:#6a706b">长桥漾</div>
  <div class="ml" style="left:166.0px;top:190.0px;color:#6a706b">仓前街道办事处</div>
  <div class="ml" style="left:213.0px;top:18.3px;color:#6a706b">浙江海外高层次人才</div>
  <div class="ml" style="left:213.0px;top:22.6px;color:#6a706b">创新园科研用地</div>
  <div class="ml" style="left:281.7px;top:17.0px;color:#6a706b">大华·西溪风情</div>
  <div class="ml" style="left:321.0px;top:14.5px;color:#6a706b">蒋家村</div>
  <div class="ml" style="left:319.0px;top:26.8px;color:#6a706b">华润城润府</div>
  <div class="ml" style="left:356.4px;top:26.8px;color:#6a706b">杭州城西银泰城</div>
  <div class="ml" style="left:344.7px;top:52.9px;color:#6a706b">西溪诚园二期</div>
  <div class="ml" style="left:217.6px;top:44.3px;color:#4d5451">仓兴街</div>
  <div class="ml" style="left:276.0px;top:41.1px;color:#6a706b">永福村</div>
  <div class="ml" style="left:266.7px;top:63.5px;color:#4d5451">绿汀路</div>
  <div class="ml" style="left:241.0px;top:110.1px;color:#6a706b">仓前雅居乐</div>
  <div class="ml" style="left:210.0px;top:96.9px;color:#6a706b">蒋家桥广场</div>
  <div class="ml" style="left:208.0px;top:163.1px;color:#4d5451">黎树下</div>
  <div class="ml" style="left:295.5px;top:165.2px;color:#4d5451">闲林港</div>
  <div class="ml" style="left:312.6px;top:130.5px;color:#6a706b">梧桐村</div>
  <div class="ml" style="left:318.0px;top:155.5px;color:#6a706b">万元</div>
  <div class="ml" style="left:335.0px;top:96.9px;color:#6a706b">西溪庄园</div>
  <div class="ml" style="left:318.0px;top:130.5px;color:#6a706b">杨家牌楼</div>
  <div class="ml" style="left:353.0px;top:134.9px;color:#6a706b">绕城村</div>
  <div class="ml" style="left:344.5px;top:171.5px;color:#6a706b">西溪湿地小学校</div>
  <div class="ml" style="left:385.0px;top:104.4px;color:#4d5451">蒋村乡</div>
  <div class="ml" style="left:380.0px;top:142.5px;color:#4d5451">龙舌嘴</div>
  <div class="ml" style="left:378.9px;top:154.5px;color:#4d5451">沈家桥</div>
  <div class="ml" style="left:409.8px;top:122.5px;color:#4d5451">洪园</div>
  <div class="ml" style="left:409.8px;top:137.5px;color:#4d5451">西溪湿地</div>
  <div class="ml" style="left:395.0px;top:167.8px;color:#4d5451">西溪国家湿地公园</div>
  <div class="ml" style="left:323.5px;top:186.7px;color:#4d5451">五常港</div>
  <div class="ml" style="left:383.0px;top:187.5px;color:#4d5451">王家桥</div>
  <div class="ml" style="left:418.4px;top:196.5px;color:#4d5451">深潭口</div>
  <div class="ml" style="left:421.6px;top:68.5px;color:#4d5451">五常大道</div>
  <div class="ml" style="left:105.0px;top:85.6px;color:#b79f62;font-size:3.3px;transform:translate(-50%,-50%) rotate(-17deg);">文一西路</div>
  <div class="ml" style="left:29.0px;top:100.2px;color:#b79f62;font-size:3.3px;transform:translate(-50%,-50%) rotate(-10deg);">文一西路</div>
  <div class="ml" style="left:130.0px;top:74.8px;color:#b79f62;font-size:3.3px;transform:translate(-50%,-50%) rotate(-17deg);">文一西路</div>
  <div class="ml" style="left:204.0px;top:52.6px;color:#b79f62;font-size:3.3px;transform:translate(-50%,-50%) rotate(-18deg);">文一西路</div>
  <div class="ml" style="left:221.0px;top:47.6px;color:#b79f62;font-size:3.3px;transform:translate(-50%,-50%) rotate(-18deg);">文一西路</div>
  <div class="ml" style="left:333.0px;top:12.5px;color:#b79f62;font-size:3.3px;transform:translate(-50%,-50%) rotate(-20deg);">文一西路</div>
  <div class="ml" style="left:65.8px;top:83.0px;color:#b79f62;font-size:3.3px;transform:translate(-50%,-50%) rotate(72deg);">良睦路</div>
  <div class="ml" style="left:77.0px;top:143.5px;color:#b79f62;font-size:3.3px;transform:translate(-50%,-50%) rotate(80deg);">大禹路</div>
  <div class="ml" style="left:80.5px;top:188.0px;color:#b79f62;font-size:3.3px;transform:translate(-50%,-50%) rotate(70deg);">科技大道</div>
  <div class="ml" style="left:101.5px;top:6.6px;color:#b79f62;font-size:3.3px;transform:translate(-50%,-50%) rotate(-3deg);">常二路</div>
  <div class="ml" style="left:164.5px;top:4.0px;color:#b79f62;font-size:3.3px;transform:translate(-50%,-50%) rotate(-4deg);">常二路</div>
  <div class="ml" style="left:115.0px;top:14.0px;color:#b79f62;font-size:3.3px;transform:translate(-50%,-50%) rotate(72deg);">仓前路</div>
  <div class="ml" style="left:141.0px;top:5.0px;color:#b79f62;font-size:3.3px;transform:translate(-50%,-50%) rotate(80deg);">高教路</div>
  <div class="ml" style="left:208.7px;top:111.3px;color:#b79f62;font-size:3.3px;transform:translate(-50%,-50%) rotate(75deg);">良睦路</div>
  <div class="ml" style="left:135.0px;top:208.5px;color:#b79f62;font-size:3.3px;transform:translate(-50%,-50%) rotate(-28deg);">余杭塘</div>
  <div class="ml" style="left:254.5px;top:5.0px;color:#b79f62;font-size:3.3px;transform:translate(-50%,-50%) rotate(68deg);">荆长路</div>
  <div class="ml" style="left:264.0px;top:80.3px;color:#b79f62;font-size:3.3px;transform:translate(-50%,-50%) rotate(-8deg);">文二西路</div>
  <div class="ml" style="left:212.0px;top:87.2px;color:#b79f62;font-size:3.3px;transform:translate(-50%,-50%) rotate(-10deg);">文二西</div>
  <div class="ml" style="left:355.4px;top:5.3px;color:#b79f62;font-size:3.3px;transform:translate(-50%,-50%) rotate(-14deg);">文二西路</div>
  <div class="ml" style="left:361.8px;top:82.2px;color:#b79f62;font-size:3.3px;transform:translate(-50%,-50%) rotate(85deg);">荆长公路</div>
  <div class="ml" style="left:382.0px;top:74.5px;color:#b79f62;font-size:3.3px;transform:translate(-50%,-50%) rotate(-14deg);">天目山路</div>
  <div class="ml" style="left:362.0px;top:122.0px;color:#b79f62;font-size:3.3px;transform:translate(-50%,-50%) rotate(55deg);">荆长公路</div>
  <div class="ml" style="left:396.2px;top:55.5px;color:#b79f62;font-size:3.3px;transform:translate(-50%,-50%) rotate(-78deg);">杭州绕城高速</div>
  <div class="ml" style="left:123.3px;top:54.2px;font-size:4.5px;font-weight:bold;color:#25564a;text-shadow:0 0 .6px #fff;">杭州师范大学</div>
  <div class="ml" style="left:127.4px;top:59.8px;font-size:4.6px;font-weight:bold;color:#25564a;text-shadow:0 0 .6px #fff;">仓前校区</div>
  <div class="ml" style="left:217px;top:63.6px;font-size:5.05px;font-weight:bold;color:#c4762a;text-shadow:0 0 .6px #fff,0 0 .6px #fff;">阿里巴巴西溪园区</div>
  <div class="ml" style="left:305px;top:72.6px;font-size:5.2px;font-weight:bold;color:#c4762a;text-shadow:0 0 .6px #fff,0 0 .6px #fff;">蒋家枫湾</div>
  <div class="ml" style="left:161.6px;top:57.6px;font-size:4.2px;color:#d8433a;">✚</div>
  <div class="ml" style="left:387px;top:84.2px;font-size:2.6px;color:#fff;background:#45a38f;padding:.4px .8px;border-radius:.6px;">G2501</div>
  <div class="a" style="left:302.6px;top:16.1px;width:2.8px;height:2.8px;border:.4px solid #8aa;border-radius:.7px;box-sizing:border-box;background:#f4f8f4;"></div>
  <div class="a" style="left:372.1px;top:25.9px;width:2.8px;height:2.8px;border:.4px solid #8aa;border-radius:.7px;box-sizing:border-box;background:#f4f8f4;"></div>
  <div class="a" style="left:370.6px;top:52.0px;width:2.8px;height:2.8px;border:.4px solid #8aa;border-radius:.7px;box-sizing:border-box;background:#f4f8f4;"></div>
  <div class="a" style="left:126.6px;top:176.0px;width:2.8px;height:2.8px;border:.4px solid #8aa;border-radius:.7px;box-sizing:border-box;background:#f4f8f4;"></div>
  <div class="a" style="left:162.1px;top:189.1px;width:2.8px;height:2.8px;border:.4px solid #8aa;border-radius:.7px;box-sizing:border-box;background:#f4f8f4;"></div>
  <div class="a" style="left:87.6px;top:201.6px;width:2.8px;height:2.8px;border:.4px solid #8aa;border-radius:.7px;box-sizing:border-box;background:#f4f8f4;"></div>
  <div class="a" style="left:331.1px;top:96.0px;width:2.8px;height:2.8px;border:.4px solid #8aa;border-radius:.7px;box-sizing:border-box;background:#f4f8f4;"></div>
  <div class="a" style="left:338.6px;top:129.6px;width:2.8px;height:2.8px;border:.4px solid #8aa;border-radius:.7px;box-sizing:border-box;background:#f4f8f4;"></div>
  <div class="a" style="left:340.6px;top:170.6px;width:2.8px;height:2.8px;border:.4px solid #8aa;border-radius:.7px;box-sizing:border-box;background:#f4f8f4;"></div>
  <div class="a" style="left:319.1px;top:185.8px;width:2.8px;height:2.8px;border:.4px solid #8aa;border-radius:.7px;box-sizing:border-box;background:#f4f8f4;"></div>
  <div class="a" style="left:237.6px;top:109.2px;width:2.8px;height:2.8px;border:.4px solid #8aa;border-radius:.7px;box-sizing:border-box;background:#f4f8f4;"></div>
  <div class="a" style="left:200.6px;top:96.0px;width:2.8px;height:2.8px;border:.4px solid #8aa;border-radius:.7px;box-sizing:border-box;background:#f4f8f4;"></div>
<!--/MAPLABELS-->
  </div>
  <!-- map controls -->
  <div class="a" style="left:190px;top:197.6px;width:71.8px;height:9px;background:#1f2b2f;"></div>
  <div class="t" style="left:193.5px;top:201.2px;font-size:3.9px;color:#d5dadc;">⚲ &nbsp;杭州市</div>
  <svg class="a" style="left:255px;top:200.6px" width="4.4" height="3" viewBox="0 0 4.4 3" fill="none" stroke="#dfe4e6" stroke-width=".8"><path d="M.4 .5L2.2 2.4L4 .5"/></svg>
  <div class="a" style="left:190px;top:210px;width:7.8px;height:16px;background:#2a2d36;border-bottom:.6px solid #9aa;box-sizing:border-box;"></div>
  <div class="a" style="left:190px;top:229px;width:7.8px;height:22.4px;background:#2a2d36;"></div>
  <div class="a" style="left:190px;top:254.4px;width:7.8px;height:8.4px;background:#2a2d36;"></div>
  <div class="a" style="left:192.2px;top:231.6px;width:3px;height:3px;border-top:.8px solid #e8e8e8;border-left:.8px solid #e8e8e8;"></div>
  <div class="a" style="left:192.4px;top:239px;width:2.6px;height:2.6px;border:.8px solid #e8e8e8;border-radius:50%;box-sizing:border-box;border-left-color:transparent;"></div>
  <div class="a" style="left:192px;top:245.6px;width:0;height:0;border-left:3.4px solid transparent;border-bottom:3.4px solid #e8e8e8;"></div>
  <div class="a" style="left:192.2px;top:256.8px;width:3.2px;height:3.2px;border-top:.8px solid #e8e8e8;border-right:.8px solid #e8e8e8;"></div>
  <div class="a" style="left:193.2px;top:258.6px;width:1.6px;height:1.6px;background:#e8e8e8;"></div>
  <!-- dialog footer -->
  <div class="a" style="left:521.3px;top:417.2px;width:28.8px;height:8.8px;border:.7px solid #2d66c4;box-sizing:border-box;"></div>
  <div class="a" style="left:554px;top:417.2px;width:33.2px;height:8.8px;border:.7px solid #2d66c4;box-sizing:border-box;"></div>
  <div class="a" style="left:592px;top:417.2px;width:28px;height:8.8px;background:#2373ee;"></div>
  <div class="t" style="left:531.5px;top:419.6px;font-size:4px;color:#3b86ef;">取消</div>
  <div class="t" style="left:564.5px;top:419.6px;font-size:4px;color:#3b86ef;">上一步</div>
  <div class="t" style="left:602px;top:419.6px;font-size:4px;color:#fff;font-weight:bold;">确定</div>
</div></div>
</body>
</html>
